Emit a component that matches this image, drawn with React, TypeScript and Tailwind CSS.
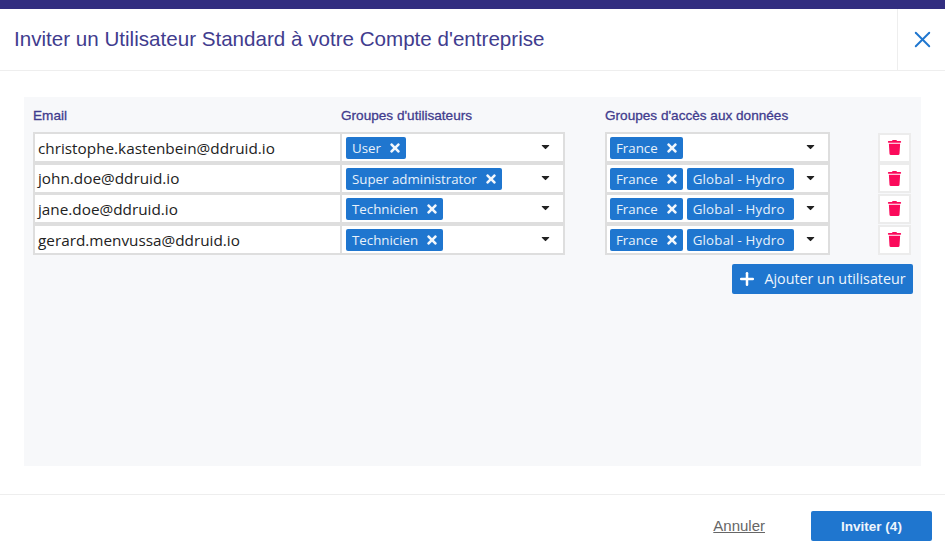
import { Plus, X } from 'lucide-react'
import { FaTimes, FaTrash, FaCaretDown } from 'react-icons/fa'

const users = [
  { email: 'christophe.kastenbein@ddruid.io', group: 'User', access: ['France'] },
  { email: 'john.doe@ddruid.io', group: 'Super administrator', access: ['France', 'Global - Hydro'] },
  { email: 'jane.doe@ddruid.io', group: 'Technicien', access: ['France', 'Global - Hydro'] },
  { email: 'gerard.menvussa@ddruid.io', group: 'Technicien', access: ['France', 'Global - Hydro'] },
]

function Tag({ label, removable = true }: { label: string; removable?: boolean }) {
  return (
    <span className={`flex h-[22px] shrink-0 items-center rounded-[2px] bg-[#1f76cf] pl-[6px] font-['Open_Sans',sans-serif] text-[13.3px] text-[#e8f1fa] ${removable ? 'pr-[4px]' : 'pr-[9px] tracking-[0.2px]'}`}>
      <span className="pt-[2px]">{label}</span>
      {removable && <FaTimes className="ml-[7px] text-[14px] text-[#f2f7fc]" />}
    </span>
  )
}

function Select({ tags, wide = false }: { tags: string[]; wide?: boolean }) {
  return (
    <div className={`flex h-[31px] w-[225px] items-center border-2 border-[#dedede] bg-white pr-[11px] ${wide ? 'pl-[4px]' : 'pl-[3px]'}`}>
      <div className="flex flex-1 gap-[4px] pt-[1px]">
        {tags.map((t) => (
          <Tag key={t} label={t} removable={t !== 'Global - Hydro'} />
        ))}
      </div>
      <FaCaretDown className="-translate-y-[1px] text-[13px] text-[#222]" />
    </div>
  )
}

export default function App() {
  return (
    <div className="flex h-[556px] w-[945px] flex-col overflow-hidden bg-white font-['Liberation_Sans',sans-serif]">
      <div className="h-[9px] bg-[#322e80]" />
      <div className="flex h-[62px] items-stretch border-b border-[#eeeeee]">
        <h1 className="flex flex-1 items-center pl-[14px] text-[20.6px] text-[#413c8e]">
          Inviter un Utilisateur Standard à votre Compte d'entreprise
        </h1>
        <div className="flex w-[48px] items-center justify-center border-l border-[#eeeeee] pl-[2px]">
          <X size={27} strokeWidth={1.7} className="text-[#1f76cf]" />
        </div>
      </div>

      <div className="ml-[24px] mt-[26px] h-[369px] w-[897px] bg-[#f7f8fa] pl-[9px] pt-[9px]">
        <div className="flex h-[26px] items-stretch text-[13.6px] text-[#413c8e]">
          <span className="w-[308px] [-webkit-text-stroke:0.3px]">Email</span>
          <span className="w-[264px] [-webkit-text-stroke:0.3px]">Groupes d'utilisateurs</span>
          <span className="[-webkit-text-stroke:0.3px]">Groupes d'accès aux données</span>
        </div>
        {users.map((u) => (
          <div key={u.email} className="-mb-[0.33px] flex items-center">
            <div className="flex h-[31px] w-[307px] items-center border-2 border-r-0 border-[#dedede] bg-white pl-[3px] pt-[1px] font-['Open_Sans',sans-serif] text-[15.3px] text-[#222]">
              {u.email}
            </div>
            <Select tags={[u.group]} wide />
            <div className="ml-[40px]">
              <Select tags={u.access} />
            </div>
            <button className="ml-[48px] flex h-[30px] w-[33px] items-center justify-center border-2 border-[#ececec] bg-white">
              <FaTrash className="text-[15px] text-[#fb0a5b]" />
            </button>
          </div>
        ))}
        <div className="mt-[9px] flex justify-end pr-[8px]">
          <button className="flex h-[30px] w-[181px] items-center justify-center gap-[7px] rounded-[2px] bg-[#1f76cf] pr-[2px] font-['Open_Sans',sans-serif] text-[14.3px] text-[#eef5fc]">
            <Plus size={20} strokeWidth={3} className="text-white" />
            Ajouter un utilisateur
          </button>
        </div>
      </div>

      <div className="mt-[28px] flex h-[62px] items-center justify-end border-t border-[#eeeeee] pr-[13px]">
        <a className="mr-[46px] pt-[2px] text-[15px] text-[#666] underline">Annuler</a>
        <button className="h-[30px] w-[121px] rounded-[2px] bg-[#1f76cf] pt-[3px] text-[13.5px] font-bold text-[#eef5fc]">
          Inviter (4)
        </button>
      </div>
    </div>
  )
}
